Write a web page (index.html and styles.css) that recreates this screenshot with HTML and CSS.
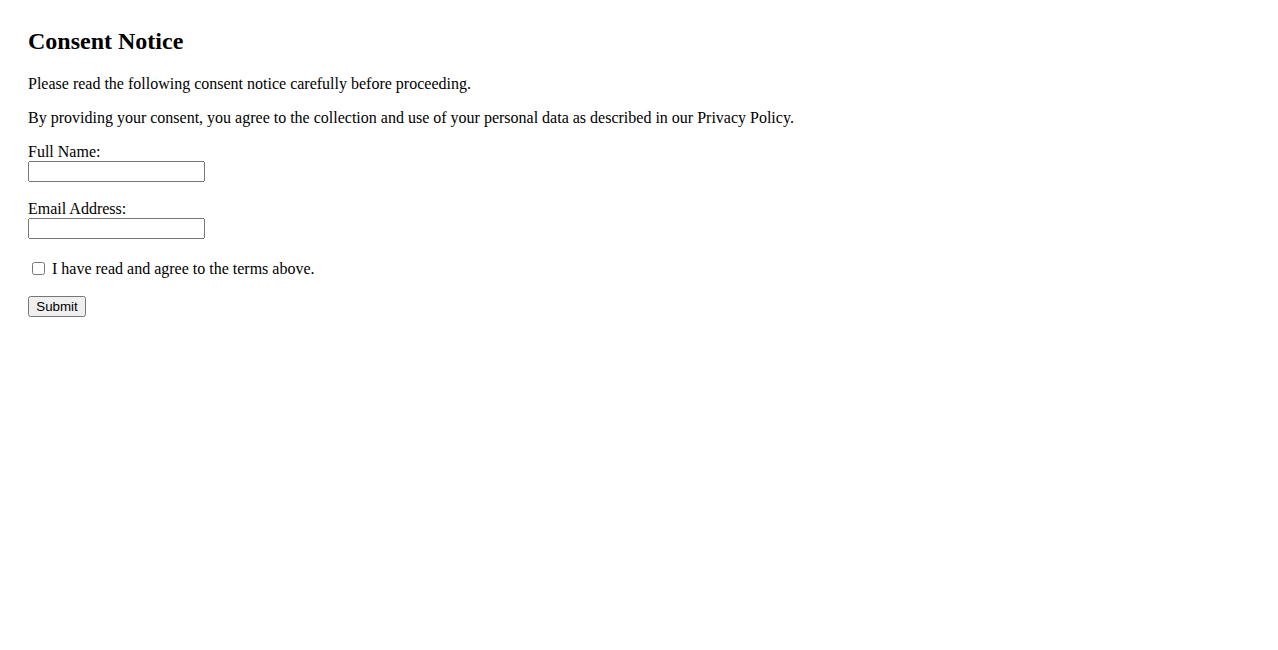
FILE: index.html
```html
<!DOCTYPE html>
<html lang="en">
<head>
    <meta charset="UTF-8">
    <meta name="viewport" content="width=device-width, initial-scale=1.0">
    <title>Consent Notice</title>
    <link rel="stylesheet" href="styles.css">
</head>
<body>
    <h2>Consent Notice</h2>
    <p>Please read the following consent notice carefully before proceeding.</p>
    <p>By providing your consent, you agree to the collection and use of your personal data as described in our Privacy Policy.</p>
    <form>
        <div class="field">
            <label for="name">Full Name:</label>
            <input type="text" id="name" name="name">
        </div>
        <div class="field">
            <label for="email">Email Address:</label>
            <input type="email" id="email" name="email">
        </div>
        <div class="check">
            <input type="checkbox" id="agree" name="agree">
            <label for="agree">I have read and agree to the terms above.</label>
        </div>
        <button type="submit">Submit</button>
    </form>
</body>
</html>
```

FILE: styles.css
```css
body {
    font-family: "Liberation Serif", "Times New Roman", serif;
    font-size: 16px;
    margin: 0;
    padding: 28px;
    color: #000;
    background-color: #fff;
}
h2 {
    font-size: 24px;
    margin-top: 0;
    margin-bottom: 20px;
}
p {
    margin: 0 0 16px;
}
.field {
    margin-bottom: 18px;
}
.field label {
    display: block;
    line-height: 18px;
}
.field input {
    display: block;
    box-sizing: border-box;
    width: 177px;
    height: 21px;
    margin: 0;
    font-family: "Liberation Sans", Arial, sans-serif;
    font-size: 13.333px;
}
.check {
    margin-top: 20px;
    margin-bottom: 18px;
    line-height: 19px;
}
.check input {
    margin: 0 3px 0 4px;
    width: 13px;
    height: 13px;
    vertical-align: -1px;
}
button {
    box-sizing: border-box;
    height: 21px;
    width: 58px;
    padding: 1px 6px;
    font-family: "Liberation Sans", Arial, sans-serif;
    font-size: 13.333px;
}
```
